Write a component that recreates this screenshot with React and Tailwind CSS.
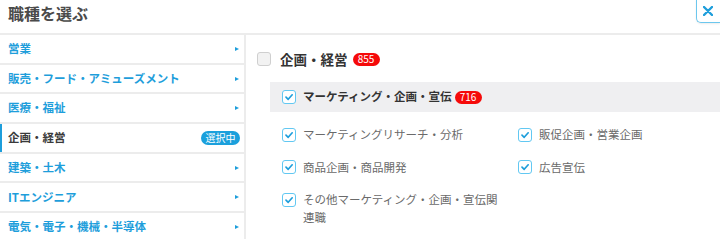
import React from 'react';

const CATEGORIES = [
  { name: '営業' },
  { name: '販売・フード・アミューズメント' },
  { name: '医療・福祉' },
  { name: '企画・経営', selected: true },
  { name: '建築・土木' },
  { name: 'ITエンジニア' },
  { name: '電気・電子・機械・半導体' },
];

const SUB_ITEMS = [
  'マーケティングリサーチ・分析',
  '販促企画・営業企画',
  '商品企画・商品開発',
  '広告宣伝',
  'その他マーケティング・企画・宣伝関連職',
];

const CheckBox = ({ checked }) =>
  checked ? (
    <span className="flex h-[14px] w-[14px] shrink-0 items-center justify-center rounded-[3px] border-[1.5px] border-[#62c8f2] bg-white">
      <svg width="10" height="10" viewBox="0 0 10 10" fill="none">
        <polyline points="2,5.2 4.2,7.3 8.2,2.8" stroke="#1e9edb" strokeWidth="1.7" strokeLinecap="round" strokeLinejoin="round" />
      </svg>
    </span>
  ) : (
    <span className="block h-[14px] w-[14px] shrink-0 rounded-[3px] border border-[#cfcfcf] bg-[#f2f2f2]" />
  );

const CountBadge = ({ value }) => (
  <span className="flex h-[13px] w-[27px] items-center justify-center rounded-full bg-[#f50a0a] text-[10px] leading-none text-white">
    {value}
  </span>
);

const App = () => {
  return (
    <div className="h-[239px] w-[720px] overflow-hidden bg-white font-['Noto_Sans_CJK_JP',sans-serif]">
      {/* header */}
      <div className="flex h-[35px] items-start justify-between border-b-2 border-[#ececec]">
        <h1 className="pl-[8px] pt-[3px] text-[16px] font-bold leading-[20px] text-[#4a4a4a]">職種を選ぶ</h1>
        <button className="-mt-px flex h-[24px] w-[24px] items-center justify-center rounded-bl-[5px] border-b border-l border-[#6cc7ee] bg-white shadow-[0_1px_2px_rgba(0,0,0,0.08)]">
          <svg width="10" height="10" viewBox="0 0 10 10" className="ml-[-1px]">
            <path d="M1 1 L9 9 M9 1 L1 9" stroke="#1e9edb" strokeWidth="2.4" strokeLinecap="round" />
          </svg>
        </button>
      </div>

      <div className="flex">
        {/* category list */}
        <div className="flex w-[246px] shrink-0 flex-col gap-[2px] bg-[#ececec] pr-[2px]">
          {CATEGORIES.map((c) =>
            c.selected ? (
              <div key={c.name} className="flex h-[27.7px] items-center justify-between border-l-2 border-[#1e9edb] bg-white pl-[6px] pr-[4px]">
                <span className="text-[11.5px] font-bold leading-none text-[#3a3a3a]">{c.name}</span>
                <span className="flex h-[14px] w-[39px] items-center justify-center rounded-full bg-[#1ba0dc] text-[10px] leading-none text-white">
                  選択中
                </span>
              </div>
            ) : (
              <div key={c.name} className="flex h-[27.7px] items-center justify-between bg-white pl-[8px] pr-[5px]">
                <span className="text-[11.5px] font-bold leading-none text-[#1e9edb]">{c.name}</span>
                <span className="h-0 w-0 border-y-[2.5px] border-l-[4px] border-y-transparent border-l-[#1e9edb]" />
              </div>
            )
          )}
        </div>

        {/* detail */}
        <div className="flex-1 pl-[11px] pt-[17px]">
          <div className="flex items-center">
            <CheckBox />
            <span className="ml-[9px] text-[13.5px] font-bold leading-[14px] text-[#333]">企画・経営</span>
            <span className="ml-[5px]">
              <CountBadge value="855" />
            </span>
          </div>

          <div className="ml-[13px] mt-[16px] flex h-[30px] items-center bg-[#efeff1] pl-[12px]">
            <CheckBox checked />
            <span className="ml-[7px] text-[11.5px] font-bold leading-none text-[#333]">マーケティング・企画・宣伝</span>
            <span className="ml-[3px]">
              <CountBadge value="716" />
            </span>
          </div>

          <div className="ml-[25px] mt-[14px] grid grid-cols-[236px_1fr] gap-y-[15px]">
            {SUB_ITEMS.map((s) => (
              <div key={s} className="flex items-start">
                <span className="mt-[1.5px]">
                  <CheckBox checked />
                </span>
                <span className="ml-[7px] w-[200px] text-[11.5px] leading-[17.5px] text-[#6a6a6a]">{s}</span>
              </div>
            ))}
          </div>
        </div>
      </div>
    </div>
  );
};

export default App;
